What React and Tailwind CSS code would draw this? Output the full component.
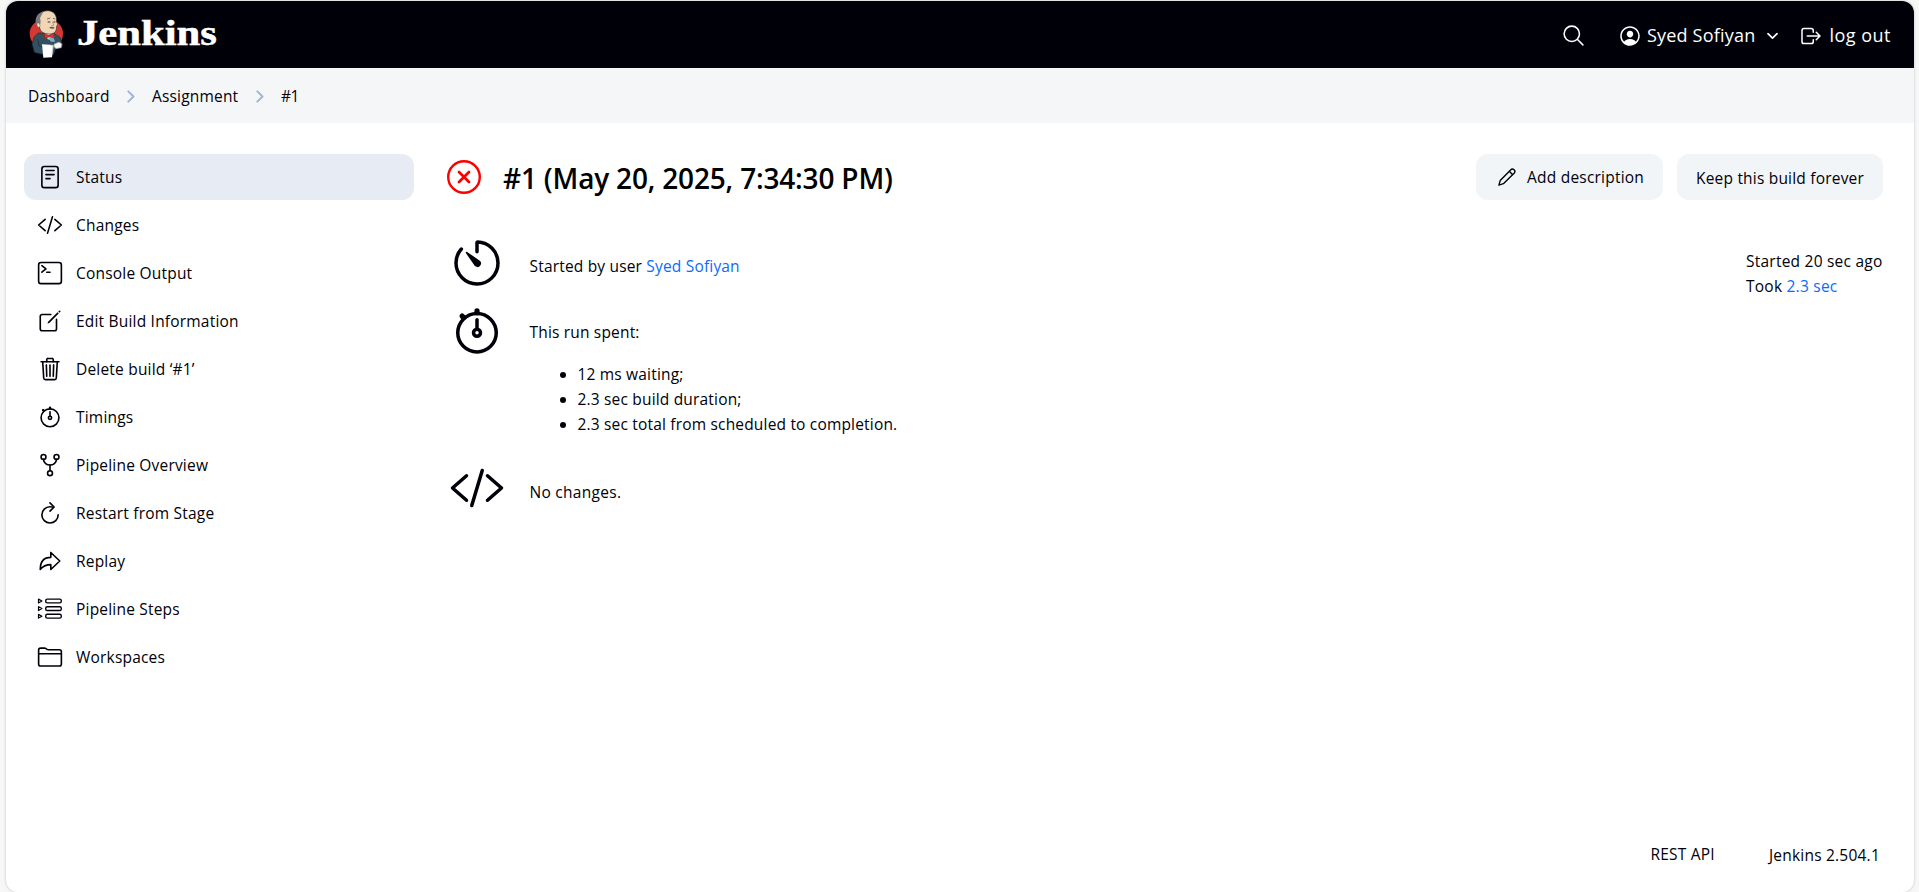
import {
  IoSearchOutline,
  IoPersonCircleOutline,
  IoLogOutOutline,
  IoCodeSlashOutline,
  IoCreateOutline,
  IoTrashOutline,
  IoTimerOutline,
  IoStopwatchOutline,
  IoArrowRedoOutline,
  IoRefreshOutline,
  IoFolderOutline,
  IoTerminalOutline,
  IoReaderOutline,
  IoGitNetworkOutline,
} from "react-icons/io5";

function ButlerLogo() {
  return (
    <svg viewBox="0 0 150 168" className="mb-[3px] h-14 w-[50px] shrink-0">
      <ellipse cx="70" cy="86" rx="50" ry="45" fill="#d33833" />
      {/* jacket */}
      <path d="M46 84 L34 96 L27 116 L34 142 L58 148 L92 148 L98 132 L118 122 L112 98 L94 86 Z" fill="#335061" stroke="#1b2a33" strokeWidth="2" />
      <path d="M44 102 L48 122 L60 127" fill="none" stroke="#1b2a33" strokeWidth="2" />
      {/* shirt */}
      <path d="M64 84 L90 86 L94 96 L84 106 L74 102 Z" fill="#f2f2f2" />
      <path d="M76 100 L92 98 L96 110 L84 110 Z" fill="#81b0c4" />
      {/* head */}
      <path d="M48 62 C40 40 48 18 72 17 C94 16 103 34 100 50 C105 56 104 60 101 63 C101 80 94 87 82 87 C66 87 54 82 51 72 Z" fill="#f0d6b7" stroke="#3b2f28" strokeWidth="2" />
      {/* hair */}
      <path d="M62 19 C44 23 34 40 39 56 L44 66 L51 66 L53 48 L51 40 C54 32 58 27 62 19 Z" fill="#7b797b" />
      <path d="M47 54 C40 50 38 62 47 68 L52 64" fill="#f0d6b7" stroke="#3b2f28" strokeWidth="1.5" />
      {/* face */}
      <path d="M72 42 L82 39 M90 40 L97 42" stroke="#6b5a4c" strokeWidth="2.5" fill="none" />
      <path d="M74 51 L82 51 M91 51 L97 51" stroke="#3b2f28" strokeWidth="3" fill="none" />
      <path d="M89 50 L92 61 L86 62" stroke="#a0785a" strokeWidth="2" fill="none" />
      <path d="M78 68 C84 64 90 65 96 69 C91 72 84 72 78 68 Z" fill="#6d5a50" />
      {/* bow tie */}
      <path d="M64 86 L77 91 L92 85 L94 99 L78 96 L65 101 Z" fill="#d33833" stroke="#7a1a17" strokeWidth="1.5" />
      {/* towel and glove */}
      <path d="M57 118 L92 120 L87 157 L61 158 Z" fill="#ffffff" />
      <path d="M82 121 L90 122 L87 148" fill="none" stroke="#b5b5b5" strokeWidth="2" />
      <path d="M93 117 L108 111 L117 117 L115 128 L100 131 L93 126 Z" fill="#f7f7f7" stroke="#8a8a8a" strokeWidth="2" />
    </svg>
  );
}

function PipelineStepsIcon() {
  return (
    <svg viewBox="0 0 26 26" fill="none" stroke="currentColor" strokeWidth="1.4" strokeLinejoin="round" className="size-[26px]">
      {[5, 12.6, 20.2].map((y) => (
        <g key={y} transform={`translate(0 ${y})`}>
          <path d="M1.5 -1.9 L4.9 0 L1.5 1.9 Z" strokeWidth="1.2" />
          <rect x="8.7" y="-1.9" width="15.6" height="3.8" rx="1.6" />
        </g>
      ))}
    </svg>
  );
}

function PencilIcon() {
  return (
    <svg viewBox="0 0 18 18" fill="none" stroke="currentColor" strokeWidth="1.4" strokeLinejoin="round" className="size-[18px]">
      <path d="M0.9 17.1 L2.2 12.6 L12.6 1.9 a2.35 2.35 0 0 1 3.5 3.4 L5.4 15.7 Z" />
      <path d="M11.3 3.3 L14.7 6.7" />
    </svg>
  );
}

function FailedIcon() {
  return (
    <svg viewBox="0 0 34 34" fill="none" stroke="#ff0000" strokeLinecap="round" className="size-[34px] shrink-0">
      <circle cx="17" cy="17" r="15.8" strokeWidth="2.4" />
      <path d="M12 12 L22 22 M22 12 L12 22" strokeWidth="2.8" />
    </svg>
  );
}

function Chevron({ className }) {
  return (
    <svg viewBox="0 0 8 13" fill="none" stroke="currentColor" strokeWidth="1.9" strokeLinecap="round" strokeLinejoin="round" className={className}>
      <path d="M1.3 1.3 L6.5 6.5 L1.3 11.7" />
    </svg>
  );
}

const tasks = [
  { label: "Status", Icon: IoReaderOutline, active: true },
  { label: "Changes", Icon: IoCodeSlashOutline },
  { label: "Console Output", Icon: IoTerminalOutline },
  { label: "Edit Build Information", Icon: IoCreateOutline },
  { label: "Delete build ‘#1’", Icon: IoTrashOutline },
  { label: "Timings", Icon: IoStopwatchOutline },
  { label: "Pipeline Overview", Icon: IoGitNetworkOutline },
  { label: "Restart from Stage", Icon: IoRefreshOutline },
  { label: "Replay", Icon: IoArrowRedoOutline },
  { label: "Pipeline Steps", Icon: PipelineStepsIcon },
  { label: "Workspaces", Icon: IoFolderOutline },
];

function Header() {
  return (
    <header className="flex h-[67px] shrink-0 items-center justify-between bg-[#000009] pr-[23px] pl-[17px] text-white">
      <div className="flex items-center">
        <ButlerLogo />
        <span className="ml-1 inline-block origin-left scale-x-[1.185] pb-[3px] font-['Liberation_Serif',serif] text-[36px] leading-none font-bold tracking-[0px] [-webkit-text-stroke:0.5px_white]">
          Jenkins
        </span>
      </div>
      <div className="flex items-center pt-0.5 text-[18px] tracking-[0.2px]">
        <IoSearchOutline className="mr-8 size-[25px]" />
        <IoPersonCircleOutline className="size-6" />
        <span className="ml-[5px]">Syed Sofiyan</span>
        <Chevron className="mr-[23px] ml-[14px] h-[12px] w-[7px] rotate-90" />
        <IoLogOutOutline className="size-6" />
        <span className="ml-1.5 tracking-[0.5px]">log out</span>
      </div>
    </header>
  );
}

function Breadcrumbs() {
  return (
    <nav className="flex h-[55px] shrink-0 items-center bg-[#f5f6f8] pt-0.5 pl-[22px]">
      <span className="w-[82px]">Dashboard</span>
      <Chevron className="mx-[17px] h-[13px] w-2 text-[#9fb3d6]" />
      <span className="w-[87px]">Assignment</span>
      <Chevron className="mx-[17px] h-[13px] w-2 text-[#9fb3d6]" />
      <span className="tracking-[-0.4px]">#1</span>
    </nav>
  );
}

function Sidebar() {
  return (
    <aside className="flex w-[390px] shrink-0 flex-col gap-0.5">
      {tasks.map(({ label, Icon, active }) => (
        <a
          key={label}
          className={
            active
              ? "flex h-[46px] items-center gap-[13px] rounded-xl bg-[#e7ebf3] pl-[13px]"
              : "flex h-[46px] items-center gap-[13px] rounded-xl pl-[13px]"
          }
        >
          <Icon className="size-[26px] shrink-0" />
          <span className="tracking-[0.2px]">{label}</span>
        </a>
      ))}
    </aside>
  );
}

function BuildSummary() {
  return (
    <div className="flex flex-col">
      <div className="flex h-[56px] gap-[25px]">
        <IoTimerOutline className="size-14 shrink-0" />
        <p className="pt-[19px]">
          Started by user <a className="text-[#0b6aff]">Syed Sofiyan</a>
        </p>
      </div>
      <div className="mt-3 flex h-[144px] gap-[25px]">
        <IoStopwatchOutline className="size-14 shrink-0" />
        <div className="pt-[17px]">
          <p>This run spent:</p>
          <ul className="mt-[17px] list-disc pl-12">
            <li>12 ms waiting;</li>
            <li>2.3 sec build duration;</li>
            <li>2.3 sec total from scheduled to completion.</li>
          </ul>
        </div>
      </div>
      <div className="mt-[13px] flex gap-[25px]">
        <IoCodeSlashOutline className="size-14 shrink-0" />
        <p className="pt-5 tracking-[0.28px]">No changes.</p>
      </div>
    </div>
  );
}

export default function App() {
  return (
    <div className="h-[892px] w-full overflow-hidden bg-[#f7f7f7] pt-px pr-[5px] pl-[6px] font-['Open_Sans',sans-serif] text-[15.5px] leading-[25px] tracking-[0.18px] text-[#000009]">
      <div className="flex h-[891px] flex-col overflow-hidden rounded-xl bg-white shadow-[0_0_2px_1px_#dcdcdc]">
        <Header />
        <Breadcrumbs />
        <div className="flex flex-1 pt-[31px] pr-[31px] pl-[18px]">
          <Sidebar />
          <main className="flex flex-1 flex-col pl-[33px]">
            <div className="flex h-[46px] items-center">
              <FailedIcon />
              <h1 className="ml-[22px] pt-0.5 text-[28px] font-semibold tracking-[-0.18px] text-black">
                #1 (May 20, 2025, 7:34:30 PM)
              </h1>
              <div className="ml-auto flex gap-[14px]">
                <button className="flex h-[46px] w-[187px] items-center gap-[11px] rounded-xl bg-[#f1f5f8] pl-[22px] tracking-[0.22px]">
                  <PencilIcon />
                  <span>Add description</span>
                </button>
                <button className="flex h-[46px] w-[206px] items-center justify-center rounded-xl bg-[#f1f5f8] pt-0.5 tracking-[0.2px]">
                  Keep this build forever
                </button>
              </div>
            </div>
            <div className="mt-[35px] flex justify-between pl-[1.5px]">
              <BuildSummary />
              <div className="w-[137px] pt-[14px] tracking-[0.23px] whitespace-nowrap">
                <p>Started 20 sec ago</p>
                <p>
                  Took <a className="text-[#0b6aff]">2.3 sec</a>
                </p>
              </div>
            </div>
          </main>
        </div>
        <footer className="flex h-[50px] shrink-0 items-start justify-end gap-[54px] pr-[34px] tracking-[0.22px]">
          <span>REST API</span>
          <span className="pt-px">Jenkins 2.504.1</span>
        </footer>
      </div>
    </div>
  );
}
